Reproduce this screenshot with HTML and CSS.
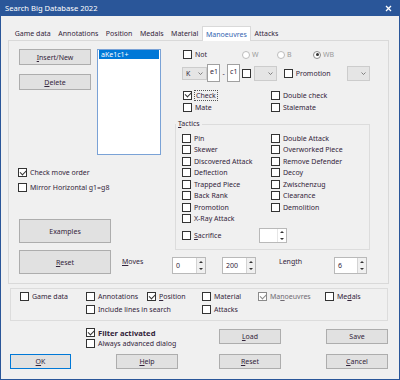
FILE: index.html
```html
<!DOCTYPE html>
<html lang="en">
<head>
<meta charset="UTF-8">
<title>Search Big Database 2022</title>
<link rel="stylesheet" href="styles.css">
</head>
<body>
<div class="window">
    <!-- Title bar -->
    <div class="titlebar">
        <span class="title">Search Big Database 2022</span>
        <svg class="close" width="7" height="7" viewBox="0 0 7 7"><path d="M1 1L6 6M6 1L1 6"/></svg>
    </div>

    <div class="client">
        <div class="tabs">
            <div class="tab">Game data</div>
            <div class="tab">Annotations</div>
            <div class="tab">Position</div>
            <div class="tab">Medals</div>
            <div class="tab">Material</div>
            <div class="tab active">Manoeuvres</div>
            <div class="tab">Attacks</div>
        </div>

        <div class="panel">
            <div class="panel-top">
                <div class="left">
                    <div class="left-top">
                        <div class="btn-col">
                            <button class="btn btn-side"><u>I</u>nsert/New</button>
                            <button class="btn btn-side"><u>D</u>elete</button>
                        </div>
                        <div class="listbox">
                            <div class="item sel">aKe1c1+</div>
                        </div>
                    </div>
                    <label class="cb row15 first"><span class="box on"></span>Check move order</label>
                    <label class="cb row15"><span class="box"></span>Mirror Horizontal g1=g8</label>
                    <button class="btn btn-big examples">Examples</button>
                </div>

                <div class="right">
                    <div class="r1">
                        <label class="cb w-not"><span class="box"></span>Not</label>
                        <label class="radio w-w"><span class="dot"></span>W</label>
                        <label class="radio w-b"><span class="dot"></span>B</label>
                        <label class="radio"><span class="dot on"></span>WB</label>
                    </div>
                    <div class="r2">
                        <div class="combo combo-k"><span>K</span><svg width="5" height="3" viewBox="0 0 5 3"><path d="M0.5 0.5L2.5 2.5L4.5 0.5"/></svg></div>
                        <div class="edit">e1</div>
                        <span class="dash">-</span>
                        <div class="edit">c1</div>
                        <span class="box lone"></span>
                        <div class="combo combo-mid"><span></span><svg width="5" height="3" viewBox="0 0 5 3"><path d="M0.5 0.5L2.5 2.5L4.5 0.5"/></svg></div>
                        <label class="cb w-promo"><span class="box"></span>Promotion</label>
                        <div class="combo combo-end"><span></span><svg width="5" height="3" viewBox="0 0 5 3"><path d="M0.5 0.5L2.5 2.5L4.5 0.5"/></svg></div>
                    </div>
                    <div class="r3">
                        <label class="cb w-col"><span class="box on"></span><span class="focus">Check</span></label>
                        <label class="cb"><span class="box"></span>Double check</label>
                    </div>
                    <div class="r4">
                        <label class="cb w-col"><span class="box"></span>Mate</label>
                        <label class="cb"><span class="box"></span>Stalemate</label>
                    </div>

                    <fieldset class="tactics">
                        <legend><u>T</u>actics</legend>
                        <div class="tgrid">
                            <label class="cb"><span class="box"></span>Pin</label>
                            <label class="cb"><span class="box"></span>Double Attack</label>
                            <label class="cb"><span class="box"></span>Skewer</label>
                            <label class="cb"><span class="box"></span>Overworked Piece</label>
                            <label class="cb"><span class="box"></span>Discovered Attack</label>
                            <label class="cb"><span class="box"></span>Remove Defender</label>
                            <label class="cb"><span class="box"></span>Deflection</label>
                            <label class="cb"><span class="box"></span>Decoy</label>
                            <label class="cb"><span class="box"></span>Trapped Piece</label>
                            <label class="cb"><span class="box"></span>Zwischenzug</label>
                            <label class="cb"><span class="box"></span>Back Rank</label>
                            <label class="cb"><span class="box"></span>Clearance</label>
                            <label class="cb"><span class="box"></span>Promotion</label>
                            <label class="cb"><span class="box"></span>Demolition</label>
                            <label class="cb"><span class="box"></span>X-Ray Attack</label>
                        </div>
                        <div class="sac-row">
                            <label class="cb w-sac"><span class="box"></span><span><u>S</u>acrifice</span></label>
                            <div class="spin spin-sac">
                                <div class="val"></div>
                                <div class="arr"><span><i class="up"></i></span><span><i class="down"></i></span></div>
                            </div>
                        </div>
                    </fieldset>
                </div>
            </div>

            <div class="prow">
                <button class="btn btn-big"><u>R</u>eset</button>
                <span class="lbl lbl-moves"><u>M</u>oves</span>
                <div class="spin">
                    <div class="val">0</div>
                    <div class="arr"><span><i class="up"></i></span><span><i class="down"></i></span></div>
                </div>
                <div class="spin spin-200">
                    <div class="val">200</div>
                    <div class="arr"><span><i class="up"></i></span><span><i class="down"></i></span></div>
                </div>
                <span class="lbl lbl-len">Len<u>g</u>th</span>
                <div class="spin spin-6">
                    <div class="val">6</div>
                    <div class="arr"><span><i class="up"></i></span><span><i class="down"></i></span></div>
                </div>
            </div>
        </div>

        <!-- Search in -->
        <div class="grp">
            <label class="cb"><span class="box"></span>Game data</label>
            <label class="cb"><span class="box"></span>Annotations</label>
            <label class="cb"><span class="box on"></span><span><u>P</u>osition</span></label>
            <label class="cb"><span class="box"></span>Material</label>
            <label class="cb dim"><span class="box on"></span><span>Ma<u>n</u>oeuvres</span></label>
            <label class="cb"><span class="box"></span><span>Me<u>d</u>als</span></label>
            <label class="cb span2"><span class="box"></span>Include lines in search</label>
            <label class="cb"><span class="box"></span>Attacks</label>
        </div>

        <div class="rowa">
            <div class="checks">
                <label class="cb bold"><span class="box on"></span>Filter activated</label>
                <label class="cb"><span class="box"></span>Always advanced dialog</label>
            </div>
            <button class="btn btn-dlg"><u>L</u>oad</button>
            <button class="btn btn-dlg gap45">Save</button>
        </div>

        <div class="rowb">
            <button class="btn btn-dlg btn-ok"><u>O</u>K</button>
            <button class="btn btn-dlg gap45"><u>H</u>elp</button>
            <button class="btn btn-dlg gap41"><u>R</u>eset</button>
            <button class="btn btn-dlg gap45"><u>C</u>ancel</button>
        </div>
    </div>
</div>
</body>
</html>
```

FILE: styles.css
```css
* {
    box-sizing: border-box;
}

body {
    margin: 0;
    background-color: #ffffff;
    color: #33243a;
    font-family: 'Noto Sans', sans-serif;
    font-size: 7px;
}

.window {
    width: 400px;
    height: 380px;
    border: 1px solid #2a5699;
    border-top: 0;
    background-color: #f0f0f0;
    overflow: hidden;
}

.titlebar {
    height: 16px;
    background-color: #2a5699;
    color: #ffffff;
    display: flex;
    align-items: center;
    justify-content: space-between;
    padding: 0 7px 0 4px;
    font-size: 7.6px;
}

.close path {
    stroke: #ffffff;
    stroke-width: 1.3;
}

.client {
    padding: 10px 0 0 7px;
}

/* Tabs */
.tabs {
    display: flex;
    align-items: flex-end;
    height: 14px;
    margin-left: 3px;
}

.tab {
    height: 13px;
    line-height: 13px;
    padding: 0 3.75px;
    white-space: nowrap;
}

.tab.active {
    height: 15px;
    line-height: 15px;
    margin-bottom: -1px;
    padding: 0 3px;
    background-color: #ffffff;
    border: 1px solid #d9d9d9;
    border-bottom: 0;
    color: #3465b0;
    position: relative;
    z-index: 1;
}

.panel {
    width: 381px;
    height: 244px;
    border: 1px solid #d9d9d9;
    padding: 8px 0 0 10px;
}

.panel-top {
    display: flex;
}

.left {
    width: 156px;
}

.right {
    width: 195px;
}

.left-top {
    display: flex;
}

.btn-col {
    width: 72px;
    display: flex;
    flex-direction: column;
    gap: 9px;
}

/* Buttons */
.btn {
    font: inherit;
    color: inherit;
    background-color: #e1e1e1;
    border: 1px solid #adadad;
    padding: 0;
    margin: 0;
    cursor: pointer;
}

.btn-side {
    width: 72px;
    height: 16px;
}

.btn-big {
    width: 92px;
    height: 24px;
}

.btn-dlg {
    width: 62px;
    height: 15px;
}

.btn-ok {
    width: 61px;
    border-color: #0078d7;
}

.gap45 {
    margin-left: 45px;
}

.gap41 {
    margin-left: 41px;
}

.examples {
    margin-top: 24px;
}

.listbox {
    margin-left: 6px;
    width: 64px;
    height: 106px;
    background-color: #ffffff;
    border: 1px solid #7aa2d6;
    padding: 0 1px;
}

.item {
    height: 9px;
    line-height: 9px;
    padding-left: 2px;
}

.item.sel {
    background-color: #0078d7;
    color: #ffffff;
}

/* Checkboxes and radios */
.cb {
    display: flex;
    align-items: center;
    white-space: nowrap;
}

.box {
    width: 9px;
    height: 9px;
    flex: none;
    margin-right: 3px;
    background-color: #ffffff;
    border: 1px solid #333333;
    display: flex;
    align-items: center;
    justify-content: center;
}

.box.on::after {
    content: "";
    width: 5px;
    height: 2.5px;
    border-left: 1px solid #333333;
    border-bottom: 1px solid #333333;
    transform: translateY(-1px) rotate(-45deg);
}

.dim {
    color: #6f6a72;
}

.dim .box {
    border-color: #8a8a8a;
}

.dim .box.on::after {
    border-color: #8a8a8a;
}

.bold {
    font-weight: 700;
    font-size: 7.6px;
}

.focus {
    outline: 1px dotted #555555;
    padding: 0 1px;
}

.row15 {
    height: 15px;
    margin-left: -1px;
}

.first {
    margin-top: 10px;
}

.radio {
    display: flex;
    align-items: center;
    color: #9a9a9a;
}

.dot {
    width: 8px;
    height: 8px;
    margin-right: 2px;
    border: 1px solid #bcbcbc;
    border-radius: 50%;
    background-color: #ffffff;
    display: flex;
    align-items: center;
    justify-content: center;
}

.dot.on {
    border-color: #8c8c8c;
}

.dot.on::after {
    content: "";
    width: 3px;
    height: 3px;
    border-radius: 50%;
    background-color: #333333;
}

/* Right column */
.r1 {
    display: flex;
    align-items: center;
    height: 11px;
    margin-left: 8px;
}

.w-not {
    width: 59px;
}

.w-w {
    width: 35px;
}

.w-b {
    width: 36px;
}

.r2 {
    display: flex;
    align-items: center;
    height: 18px;
    margin: 4px 0 0 7px;
}

.combo {
    height: 15px;
    background-color: #e5e5e5;
    border: 1px solid #cccccc;
    display: flex;
    align-items: center;
    justify-content: space-between;
    padding: 0 3px 0 3px;
}

.combo path {
    fill: none;
    stroke: #666666;
    stroke-width: 0.8;
}

.combo-k {
    width: 26px;
    height: 13px;
}

.combo-mid {
    width: 23px;
    margin-left: 3px;
}

.combo-end {
    width: 24px;
}

.edit {
    width: 14px;
    height: 18px;
    background-color: #ffffff;
    border: 1px solid #a0a0a0;
    padding: 2px 0 0 2px;
    line-height: 9px;
}

.r2 .edit:first-of-type {
    margin-left: 3px;
}

.dash {
    width: 7px;
    text-align: center;
}

.lone {
    margin: 0 0 0 2px;
}

.w-promo {
    width: 67px;
    margin-left: 7px;
}

.r3,
.r4 {
    display: flex;
    align-items: center;
    height: 12px;
    margin-left: 8px;
}

.r3 {
    margin-top: 7px;
}

.w-col {
    width: 88px;
}

/* Tactics group */
.tactics {
    margin: 6px 0 0 0;
    padding: 0;
    min-width: 0;
    width: 195px;
    border: 1px solid #dcdcdc;
}

.tactics legend {
    padding: 0 2px;
    line-height: 10px;
}

.tgrid {
    display: grid;
    grid-template-columns: 89px 1fr;
    grid-auto-rows: 11.5px;
    padding: 3.25px 0 0 6px;
}

.sac-row {
    display: flex;
    align-items: center;
    height: 15px;
    margin: 3.75px 0 6px 6px;
}

.w-sac {
    width: 77px;
}

/* Spin boxes */
.spin {
    width: 34px;
    height: 17px;
    margin-top: 7px;
    display: flex;
    background-color: #ffffff;
    border: 1px solid #b9b9b9;
}

.spin .val {
    flex: 1;
    padding: 3px 0 0 3px;
    line-height: 9px;
}

.spin .arr {
    width: 9px;
    display: flex;
    flex-direction: column;
    background-color: #f0f0f0;
    border-left: 1px solid #d4d4d4;
}

.spin .arr span {
    flex: 1;
    display: flex;
    align-items: center;
    justify-content: center;
}

.up,
.down {
    width: 0;
    height: 0;
    border-left: 2px solid transparent;
    border-right: 2px solid transparent;
}

.up {
    border-bottom: 2.5px solid #333333;
}

.down {
    border-top: 2.5px solid #333333;
}

.spin-sac {
    width: 28px;
    height: 15px;
    margin-top: 0;
}

.spin-sac .arr {
    background-color: #ffffff;
    border-left-color: #e6e6e6;
}

.spin-200 {
    margin-left: 16px;
}

.spin-6 {
    width: 33px;
}

.prow {
    display: flex;
    align-items: flex-start;
}

.lbl {
    margin-top: 7px;
    line-height: 10px;
}

.lbl-moves {
    width: 50px;
    margin-left: 11px;
}

.lbl-len {
    width: 55px;
    margin-left: 23px;
}

/* Bottom group */
.grp {
    width: 378px;
    height: 33px;
    margin: 4px 0 0 2px;
    padding: 1px 0 0 9px;
    border: 1px solid #dcdcdc;
    display: grid;
    grid-template-columns: 66px 61px 55px 56px 67px 1fr;
    grid-template-rows: 13px 13px;
}

.span2 {
    grid-column: 2 / span 2;
}

.rowa {
    display: flex;
    align-items: flex-start;
    margin: 6px 0 0 78px;
}

.checks {
    width: 133px;
}

.checks .cb {
    height: 11px;
}

.rowa .btn {
    margin-top: 2px;
}

.rowa .gap45 {
    margin-left: 45px;
}

.rowb {
    display: flex;
    margin: 5px 0 0 2px;
}
```
